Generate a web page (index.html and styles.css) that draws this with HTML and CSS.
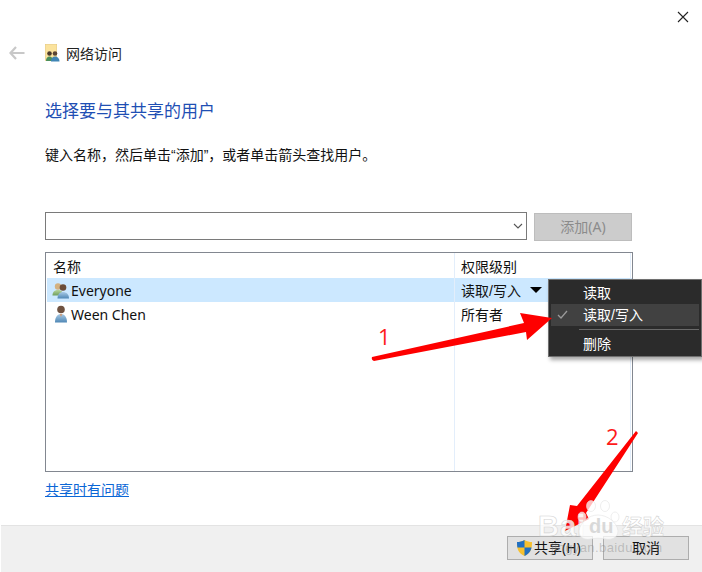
FILE: index.html
```html
<!DOCTYPE html>
<html lang="zh">
<head>
<meta charset="utf-8">
<title>网络访问</title>
<link rel="stylesheet" href="styles.css">
</head>
<body>
<div class="dialog">
  <div class="titlebar">
    <svg class="close" width="12" height="12" viewBox="0 0 12 12"><path d="M1 1l10 10M11 1L1 11" stroke="#222" stroke-width="1.1" fill="none"/></svg>
  </div>
  <div class="nav">
    <svg class="back" width="16" height="14" viewBox="0 0 16 14"><path d="M7 1L1.5 7 7 13M2 7h13.500" stroke="#c8c8c8" stroke-width="2.200" fill="none"/></svg>
    <svg class="navicon" width="15" height="18" viewBox="0 0 15 18">
      <rect x="0.300" y="0.300" width="11.400" height="16.400" fill="#fbe39d" stroke="#e6c97c" stroke-width=".6"/>
      <circle cx="4.500" cy="9.500" r="2.300" fill="#4a3a2c"/><path d="M1 17c0-3 1.500-4.500 3.500-4.500S8 14 8 17z" fill="#4b8f5c"/>
      <circle cx="10" cy="9.500" r="2.300" fill="#5a4433"/><path d="M6 17.500c0-3.500 1.800-5 4-5s4.500 1.500 4.500 5z" fill="#3f85b5"/>
    </svg>
    <span class="navtitle">网络访问</span>
  </div>
  <h1 class="heading">选择要与其共享的用户</h1>
  <p class="hint">键入名称，然后单击“添加”，或者单击箭头查找用户。</p>
  <div class="addrow">
    <div class="combo">
      <svg width="10" height="6" viewBox="0 0 10 6"><path d="M1 1l4 4 4-4" stroke="#555" stroke-width="1.100" fill="none"/></svg>
    </div>
    <div class="addbtn">添加(A)</div>
  </div>
  <div class="list">
    <div class="row head"><span class="c-name">名称</span><span class="c-perm">权限级别</span></div>
    <div class="row selected">
      <span class="c-name with-icon">
        <svg width="18" height="17" viewBox="0 0 18 17">
          <defs>
            <linearGradient id="bodyA" x1="0" y1="0" x2="0" y2="1"><stop offset="0" stop-color="#a9cbe6"/><stop offset="1" stop-color="#4f87b5"/></linearGradient>
            <linearGradient id="bodyB" x1="0" y1="0" x2="0" y2="1"><stop offset="0" stop-color="#b7d49a"/><stop offset="1" stop-color="#6e9f5e"/></linearGradient>
          </defs>
          <circle cx="6" cy="4.500" r="3.200" fill="#d3b182"/><path d="M0.500 13.500c0-4 2.500-5.500 5.500-5.500s5 1.500 5 5.500z" fill="url(#bodyB)"/>
          <circle cx="11" cy="5.500" r="3.300" fill="#6b4c38"/><path d="M5.500 16.500c0-4.500 2.500-6.500 5.500-6.500s6 2 6 6.500z" fill="url(#bodyA)"/>
        </svg>
        Everyone
      </span>
      <span class="c-perm perm-drop">读取/写入<i class="caret"></i></span>
    </div>
    <div class="row">
      <span class="c-name with-icon">
        <svg width="18" height="18" viewBox="0 0 18 18">
          <defs><linearGradient id="bodyC" x1="0" y1="0" x2="0" y2="1"><stop offset="0" stop-color="#a9cbe6"/><stop offset="1" stop-color="#4f87b5"/></linearGradient></defs>
          <circle cx="9" cy="4.500" r="3.800" fill="#6f5241"/><path d="M3 17.500c0-5.500 2.500-8.500 6-8.500s6 3 6 8.500z" fill="url(#bodyC)"/><path d="M7.500 9l1.500 3 1.500-3z" fill="#c99f82"/>
        </svg>
        Ween Chen
      </span>
      <span class="c-perm">所有者</span>
    </div>
    <div class="col-line"></div>
    <div class="right-line"></div>
  </div>
  <a class="help">共享时有问题</a>
  <div class="footer">
    <div class="btn share">
      <svg width="17" height="18" viewBox="0 0 17 18"><path d="M8.500 1C6 2.500 3.500 3 1 3c0 7 1 11 7.500 14C15 14 16 10 16 3c-2.500 0-5-.5-7.500-2z" fill="#f6c02f"/><path d="M8.500 1C6 2.500 3.500 3 1 3c0 2 .1 4 .4 5.500h7.100zM8.500 8.500V17c4.500-2 6.300-5 7-8.500z" fill="#1f6fc4"/></svg>
      <span>共享(H)</span>
    </div>
    <div class="btn">取消</div>
  </div>
  <div class="menu">
    <div class="mitem">读取</div>
    <div class="mitem current"><svg class="check" width="11" height="9" viewBox="0 0 11 9"><path d="M1 5l3 3 6-7" stroke="#9a9a9a" stroke-width="1.300" fill="none"/></svg>读取/写入</div>
    <div class="msep"></div>
    <div class="mitem">删除</div>
  </div>
  <svg class="annot" width="702" height="572" viewBox="0 0 702 572">
    <path d="M372 357L524 323 520 313 552 318 527 340 526 332 374 361Q371 360 372 357z" fill="#fe0000"/>
    <path d="M636 431L638 433 586 513 589 519 565 531 570 505 577 506z" fill="#fe0000"/>
  </svg>
  <span class="num n1">1</span>
  <span class="num n2">2</span>
  <div class="mark">
    <span class="mark-bai">Bai</span>
    <span class="paw-wrap">
      <svg width="46" height="41" viewBox="0 0 46 41"><g fill="#fff" fill-opacity=".75" stroke="#e2e2e2" stroke-width=".6"><ellipse cx="6" cy="17" rx="4" ry="5"/><ellipse cx="15" cy="6" rx="4.500" ry="5.500"/><ellipse cx="29" cy="6" rx="4.500" ry="5.500"/><ellipse cx="39" cy="17" rx="4" ry="5"/><path d="M3 31c1-9 10-16 19-16s19 7 20 16c0 7-7 9-12 8-5-1-11-1-16 0-5 1-11-1-11-8z"/></g></svg>
      <span class="mark-du">du</span>
    </span>
    <span class="mark-jy">经验</span>
  </div>
  <span class="mark-url">jingyan.baidu.com</span>
</div>
</body>
</html>
```
FILE: styles.css
```css
* { box-sizing: border-box; }
html, body { margin: 0; padding: 0; background: #fff; }
body { font-family: "Noto Sans", "Noto Sans CJK SC", sans-serif; color: #111; }
.dialog {
  position: relative;
  width: 702px;
  height: 572px;
  overflow: hidden;
  display: flex;
  flex-direction: column;
  background: #fff;
}
.titlebar { height: 43px; display: flex; justify-content: flex-end; padding: 11px 13px 0 0; }
.close { display: block; }
.nav { height: 20px; display: flex; align-items: center; padding-left: 9px; font-size: 14px; }
.back { margin-right: 20px; }
.navicon { margin-right: 6px; }
.navtitle { line-height: 20px; font-family: "Noto Sans CJK SC", sans-serif; color: #222; }
.heading {
  margin: 35px 0 0 45px;
  font: 400 17px/24px "Noto Sans CJK SC", sans-serif;
  color: #1f4fb4;
  height: 24px;
}
.hint {
  margin: 24px 0 0 45px;
  font: 400 14px/18px "Liberation Sans", "Noto Sans CJK SC", sans-serif;
  height: 18px;
  color: #111;
}
.addrow { margin: 48px 0 0 45px; display: flex; align-items: flex-start; gap: 7px; }
.combo {
  width: 482px;
  height: 28px;
  border: 1px solid #7a7a7a;
  background: #fff;
  display: flex;
  align-items: center;
  justify-content: flex-end;
  padding-right: 3px;
}
.addbtn {
  width: 98px;
  height: 28px;
  margin-top: 1px;
  background: #ccc;
  border: 1px solid #bdbdbd;
  color: #8b8b8b;
  font-size: 14px;
  line-height: 26px;
  text-align: center;
  font-family: "Noto Sans", "Noto Sans CJK SC", sans-serif;
}
.list {
  position: relative;
  margin: 11px 0 0 45px;
  width: 588px;
  height: 220px;
  border: 1px solid #828790;
  padding: 1px 0 0 1px;
  background: #fff;
}
.row { display: flex; height: 24px; align-items: center; font-size: 14px; position: relative; z-index: 1; }
.row.head { height: 24px; font-family: "Noto Sans CJK SC", sans-serif; }
.row.selected { background: #cce8ff; }
.c-name { width: 408px; padding-left: 6px; }
.with-icon { display: flex; align-items: center; gap: 1px; padding-left: 5px; }
.c-perm { padding-left: 6px; font-size: 14px; font-family: "Liberation Sans", "Noto Sans CJK SC", sans-serif; }
.perm-drop { display: flex; align-items: center; }
.caret {
  width: 0; height: 0;
  margin-left: 9px;
  border-left: 6px solid transparent;
  border-right: 6px solid transparent;
  border-top: 6px solid #000;
}
.col-line { position: absolute; left: 408px; top: 0; bottom: 0; width: 1px; background: #e3eefb; z-index: 2; }
.right-line { position: absolute; right: 1px; top: 0; bottom: 0; width: 1px; background: #e3eefb; z-index: 2; }
.help {
  margin: 7px 0 0 45px;
  font: 400 14px/20px "Noto Sans CJK SC", sans-serif;
  color: #0a66d6;
  text-decoration: underline;
  height: 20px;
  width: 84px;
}
.footer {
  margin: 26px 0 0 1px;
  flex: 1;
  background: #f0f0f0;
  border-top: 1px solid #e3e3e3;
  display: flex;
  justify-content: flex-end;
  gap: 10px;
  padding: 10px 13px 0 0;
}
.btn {
  width: 86px;
  height: 24px;
  background: #e1e1e1;
  border: 1px solid #adadad;
  font: 400 14px/22px "Noto Sans", "Noto Sans CJK SC", sans-serif;
  text-align: center;
  color: #111;
  display: flex;
  align-items: center;
  justify-content: center;
}
.share { justify-content: flex-start; padding-left: 8px; }
.share svg { margin-right: 1px; }
.menu {
  position: absolute;
  z-index: 4;
  left: 548px;
  top: 279px;
  width: 154px;
  height: 78px;
  background: #2b2b2b;
  border: 1px solid #6f6f6f;
  padding: 2px;
  color: #fff;
  font: 400 14px/22px "Liberation Sans", "Noto Sans CJK SC", sans-serif;
  box-shadow: 2px 3px 4px rgba(0,0,0,.35);
}
.mitem { position: relative; height: 22px; padding-left: 32px; line-height: 22px; }
.mitem.current { background: #414141; }
.check { position: absolute; left: 6px; top: 6px; }
.msep { height: 1px; margin: 3px 0 3px 28px; background: #6a6a6a; }
.annot { position: absolute; left: 0; top: 0; pointer-events: none; z-index: 5; }
.num { position: absolute; color: #fe1a1a; font: 400 22px/26px "Open Sans", sans-serif; z-index: 5; }
.n1 { left: 378px; top: 323px; }
.n2 { left: 606px; top: 423px; }
.mark { position: absolute; left: 538px; top: 500px; display: flex; align-items: flex-start; z-index: 6; }
.mark-bai { font: 700 29px/30px "Liberation Sans", sans-serif; color: rgba(255,255,255,.8); -webkit-text-stroke: .6px #d4d4d4; width: 38px; margin-top: 11px; letter-spacing: 1px; }
.paw-wrap { position: relative; width: 46px; height: 41px; }
.paw-wrap svg { display: block; }
.mark-du { position: absolute; left: 13px; top: 15px; font: 700 20px/22px "Liberation Sans", sans-serif; color: rgba(205,205,205,.75); }
.mark-jy { font: 700 21px/26px "Noto Sans CJK SC", sans-serif; color: rgba(255,255,255,.75); -webkit-text-stroke: .5px #cfcfcf; margin-top: 12px; }
.mark-url { position: absolute; left: 551px; top: 540px; font: 400 13px/16px "Liberation Sans", sans-serif; color: rgba(130,130,130,.4); z-index: 6; letter-spacing: .4px; }
```
